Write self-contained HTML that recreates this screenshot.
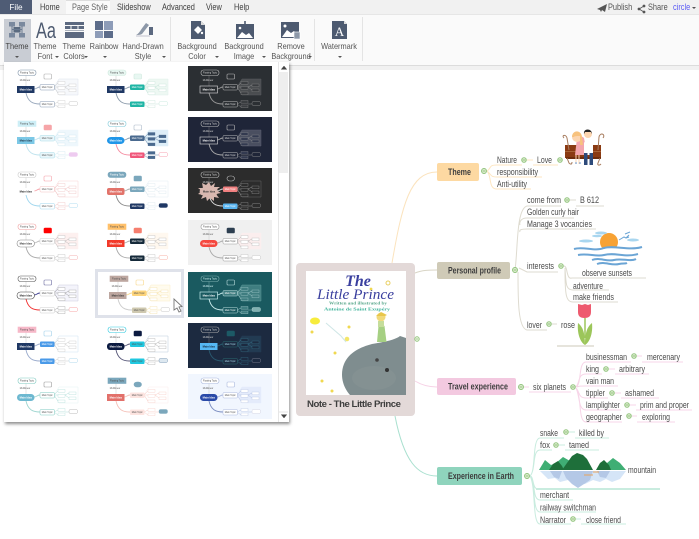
<!DOCTYPE html>
<html><head><meta charset="utf-8">
<style>
html,body{margin:0;padding:0;background:#fff}
body{width:699px;height:539px;overflow:hidden;position:relative;font-family:"Liberation Sans",sans-serif;color:#444}
.a{position:absolute;white-space:nowrap}
.tab{top:0;height:14px;line-height:15px;font-size:8.8px;color:#3c3c3c;transform:scaleX(.84);transform-origin:left center}
.lb{font-size:8.4px;color:#555;line-height:10px;text-align:center;transform:translateX(-50%) scaleX(.88)}
.ar{position:absolute;width:0;height:0;border-left:2px solid transparent;border-right:2px solid transparent;border-top:2px solid #555}
.thumb{position:absolute;width:84px;height:45px;display:block;filter:blur(.3px)}
</style></head>
<body>
<!-- tab bar -->
<div class="a" style="left:0;top:0;width:699px;height:14px;background:#f1f1f1"></div>
<div class="a" style="left:0;top:0;width:32px;height:14px;background:#4f5c75;color:#fff;font-size:8.2px;line-height:15px;text-align:center">File</div>
<div class="a" style="left:66px;top:0;width:44px;height:14px;background:#fafafa;border-top:1px solid #ddd;box-sizing:border-box"></div>
<div class="a tab" style="left:40px">Home</div>
<div class="a tab" style="left:72px;color:#666">Page Style</div>
<div class="a tab" style="left:117px">Slideshow</div>
<div class="a tab" style="left:162px">Advanced</div>
<div class="a tab" style="left:206px">View</div>
<div class="a tab" style="left:234px">Help</div>
<div class="a tab" style="left:608px;color:#555">Publish</div>
<div class="a tab" style="left:648px;color:#555">Share</div>
<div class="a tab" style="left:673px;color:#5a5af5">circle</div>
<div class="ar" style="left:692px;top:7px"></div>
<svg class="a" style="left:596px;top:2px" width="50" height="12" viewBox="0 0 50 12">
<path d="M1 7L11 2 9 10 6 8 5 10 4 8z" fill="#555"/>
<g stroke="#555" fill="#555" stroke-width=".8"><path d="M48 4L43 7 48 10" fill="none"/><circle cx="48" cy="4" r="1"/><circle cx="43" cy="7" r="1"/><circle cx="48" cy="10" r="1"/></g>
</svg>
<!-- ribbon -->
<div class="a" style="left:0;top:14px;width:699px;height:51px;background:#fafafa;border-top:1px solid #e6e6e6;box-sizing:border-box"></div>
<div class="a" style="left:0;top:65px;width:699px;height:5px;background:#f1f1f1;border-top:1px solid #dcdcdc;box-sizing:border-box"></div>
<div class="a" style="left:4px;top:19px;width:27px;height:43px;background:#c9cdd4"></div>
<div class="a" style="left:170px;top:17px;width:1px;height:44px;background:#e4e4e4"></div>
<div class="a" style="left:314px;top:19px;width:1px;height:42px;background:#e4e4e4"></div>
<div class="a" style="left:362px;top:17px;width:1px;height:44px;background:#e4e4e4"></div>

<svg class="a" style="left:0;top:15px" width="360" height="30" viewBox="0 15 360 30">
<!-- theme -->
<g fill="#7a899e"><rect x="9" y="22" width="6" height="4.500"/><rect x="19" y="22" width="6" height="4.500"/><rect x="9" y="33" width="6" height="4.500"/><rect x="19" y="33" width="6" height="4.500"/></g>
<rect x="13.500" y="27" width="7" height="5.500" fill="#5b6b80"/>
<path d="M12 26v7M22 26v7M12 29.500h10" stroke="#6a7a90" fill="none"/>
<text x="36" y="38" font-size="22" fill="#4d5a70" font-family="Liberation Sans" textLength="20" lengthAdjust="spacingAndGlyphs">Aa</text>
<!-- colors -->
<g fill="#5c6980"><rect x="65" y="22" width="19" height="3"/><rect x="65" y="26" width="5.500" height="3"/><rect x="71.500" y="26" width="6" height="3"/><rect x="78.500" y="26" width="5.500" height="3"/><rect x="65" y="30" width="19" height="1" opacity=".5"/><rect x="65" y="32" width="19" height="6"/></g>
<!-- rainbow -->
<g><rect x="95" y="21" width="8" height="9" fill="#5c6c8a"/><rect x="104" y="21" width="9" height="9" fill="#8d9cb8"/><rect x="95" y="31" width="8" height="7" fill="#8d9cb8"/><rect x="104" y="31" width="9" height="7" fill="#5c6c8a"/></g>
<!-- hand drawn -->
<path d="M136 35c3-1 5-6 10-12l3 2-7 9c-2 1-4 1-6 1z" fill="#8d98a8"/><rect x="149" y="27" width="4" height="8" fill="#5c6980"/><path d="M136 36h14" stroke="#aab" stroke-width=".7"/>
<!-- bg color -->
<path d="M191 21h10l4 4v14h-14z" fill="#4d5a70"/><path d="M201 21l4 4h-4z" fill="#ddd"/><path d="M194 30l4-4 4 4-4 4z" fill="#fff"/><circle cx="202" cy="33" r="1.200" fill="#fff"/>
<!-- bg image -->
<rect x="236" y="24" width="18" height="15" fill="#4d5a70"/><path d="M237 38l5-6 4 3 3-2 4 5z" fill="#fff"/><path d="M245 21v7M242 26l3 3 3-3" stroke="#4d5a70" stroke-width="1.600" fill="none"/><circle cx="240" cy="28" r="1.300" fill="#fff"/>
<!-- remove bg -->
<rect x="281" y="22" width="18" height="16" fill="#4d5a70"/><path d="M282 37l5-7 4 3 3-2 4 6z" fill="#fff"/><circle cx="285" cy="26" r="1.500" fill="#fff"/><rect x="294" y="32" width="6" height="7" fill="#8d98a8" stroke="#fff" stroke-width=".6"/>
<!-- watermark -->
<path d="M332 21h12l3 3v15h-15z" fill="#4d5a70"/><path d="M344 21l3 3h-3z" fill="#ddd"/><text x="339.500" y="36" font-size="13" fill="#fff" text-anchor="middle" font-family="Liberation Serif">A</text>
</svg>

<div class="a lb" style="left:17px;top:41px;color:#444">Theme</div>
<div class="a lb" style="left:45px;top:41px">Theme<br>Font</div>
<div class="a lb" style="left:74px;top:41px">Theme<br>Colors</div>
<div class="a lb" style="left:104px;top:41px">Rainbow</div>
<div class="a lb" style="left:143px;top:41px">Hand-Drawn<br>Style</div>
<div class="a lb" style="left:197px;top:41px">Background<br>Color</div>
<div class="a lb" style="left:244px;top:41px">Background<br>Image</div>
<div class="a lb" style="left:291px;top:41px">Remove<br>Background</div>
<div class="a lb" style="left:339px;top:41px">Watermark</div>
<div class="ar" style="left:15px;top:56px"></div>
<div class="ar" style="left:55px;top:56px"></div>
<div class="ar" style="left:84px;top:56px"></div>
<div class="ar" style="left:103px;top:56px"></div>
<div class="ar" style="left:162px;top:56px"></div>
<div class="ar" style="left:215px;top:56px"></div>
<div class="ar" style="left:262px;top:56px"></div>
<div class="ar" style="left:308px;top:56px"></div>
<div class="ar" style="left:338px;top:56px"></div>

<!-- canvas mindmap -->
<svg class="a" style="left:0;top:0" width="699" height="539" viewBox="0 0 699 539" font-family="Liberation Sans" font-size="8.8" fill="#4a4a4a">
<!-- connectors -->
<g fill="none" stroke-width="1">
<path d="M392 263C402 205 410 172 437 172" stroke="#fbe3bd"/>
<path d="M415 273C422 270 430 270 437 270" stroke="#d9d5c6"/>
<path d="M415 381C423 386 430 387 437 387" stroke="#f6d2e6"/>
<path d="M395 416C404 462 418 476 437 476" stroke="#a9e0cf"/>
</g>
<!-- note -->
<rect x="296" y="263" width="119" height="153" rx="4" fill="#e3d9d8"/>
<rect x="306" y="271" width="100" height="124" fill="#fff"/>
<text x="358" y="286" font-family="Liberation Serif" font-style="italic" font-size="16" fill="#3a3f9e" text-anchor="middle" font-weight="bold">The</text>
<text x="317" y="299" font-family="Liberation Serif" font-style="italic" font-size="15" fill="#3a3f9e" textLength="77" lengthAdjust="spacingAndGlyphs">Little Prince</text>
<text x="329" y="304.500" font-family="Liberation Serif" font-size="3.800" fill="#5aa88c" textLength="58" lengthAdjust="spacingAndGlyphs" font-weight="bold">Written and illustrated by</text>
<text x="324" y="310.500" font-family="Liberation Serif" font-size="4.600" fill="#3fb39a" textLength="66" lengthAdjust="spacingAndGlyphs" font-weight="bold">Antoine de Saint Exupéry</text>
<path d="M350 395C342 386 340 374 344 364 349 352 361 347 372 344 384 342 395 340 400 336L406 338V395z" fill="#7f8d8f"/>
<ellipse cx="374" cy="378" rx="22" ry="12" fill="#899696" opacity=".5"/>
<circle cx="377" cy="360" r="1.800" fill="#444"/><circle cx="387" cy="370" r="2" fill="#333"/>
<path d="M377 342l1.500-16c1-1 5-1 6 0l2 16z" fill="#a6d083"/>
<circle cx="381" cy="317" r="4.500" fill="#f1d97a"/><path d="M376 316l5-4 6 3-2 1h-8z" fill="#e9c64a"/>
<rect x="378" y="321" width="6" height="6" fill="#c5dd9b"/>
<ellipse cx="315" cy="321" rx="5" ry="3.500" fill="#f7ec3c"/>
<circle cx="347" cy="339" r="2.300" fill="#f4e66a"/>
<path d="M326 323l15 13 5 6" stroke="#cfe6e6" fill="none"/>
<g fill="#f0d850"><circle cx="371" cy="289" r="1.400"/><circle cx="388" cy="283" r="2" fill="none" stroke="#e8cf60"/><circle cx="349" cy="327" r="1.500"/><circle cx="312" cy="332" r="1.500"/><circle cx="335" cy="353" r="1.500"/><circle cx="322" cy="381" r="1.500"/><circle cx="332" cy="391" r="1.500"/></g>
<text x="307" y="407" font-size="9.600" font-weight="bold" fill="#3e3e3e" textLength="94" lengthAdjust="spacing">Note - The Little Prince</text>
<circle cx="417" cy="339" r="2.300" fill="#e8f4dc" stroke="#8fc27a" stroke-width=".8"/><path d="M415.500 339h3" stroke="#8fc27a" stroke-width=".7"/>

<!-- branch boxes -->
<rect x="437" y="163" width="42" height="18" rx="2" fill="#fdd9a2"/>
<rect x="437" y="262" width="73" height="17" rx="2" fill="#cfcab7"/>
<rect x="437" y="378" width="79" height="17" rx="2" fill="#f3c9e0"/>
<rect x="437" y="467" width="85" height="18" rx="2" fill="#8fd4bd"/>
<g font-weight="bold" fill="#3e3e3e" font-size="8.800">
<text x="448" y="175" textLength="23" lengthAdjust="spacingAndGlyphs">Theme</text><text x="448" y="273.500" textLength="53" lengthAdjust="spacingAndGlyphs">Personal profile</text><text x="448" y="389.500" textLength="60" lengthAdjust="spacingAndGlyphs">Travel experience</text><text x="448" y="479" textLength="66" lengthAdjust="spacingAndGlyphs">Experience in Earth</text>
</g>

<!-- stems -->
<g fill="none" stroke-width="1">
<g stroke="#fde6c2"><path d="M487 171C492 168 488 165 497 165H522M487 171C492 175 490 177 497 177H542M487 171C492 176 488 189 497 189H531"/><path d="M527 160h6M533 165h25"/><path d="M483 171h4"/></g>
<g stroke="#dedbd0"><path d="M515 270C518 250 516 209 527 206H561M520 225C519 222 521 218 527 218H574M520 232C519 230 521 229 527 229H596M519 268L527 272H558M518 272C518 300 518 328 527 330H547"/><path d="M570 200h6M576 206h28M552 324h5"/><path d="M557 346h37" stroke-width="1.600"/><path d="M564 266C568 266 566 280 572 278H646M565 268C566 285 566 290 573 290H609M565 270C565 295 566 302 573 302H618"/></g>
<g stroke="#f7d5e8"><path d="M524 387h5M529 392h42"/><path d="M576 387C582 384 578 362 586 362H631M576 387C580 382 578 374 586 374H602M577 387C580 386 578 386 586 386H618M576 388C580 392 578 398 586 398H608M576 388C580 396 578 410 586 410H621M576 388C582 398 578 422 586 422H622"/><path d="M637 356h5M642 362h41M609 369h6M615 374h34M615 393h6M621 398h38M630 405h6M636 410h56M632 416h5M637 422h38"/></g>
<g stroke="#c9ecdf"><path d="M530 476C536 472 532 438 540 438H564M530 476C536 470 532 450 540 450H552M530 476C534 476 532 489 538 489M530 476C536 482 532 500 540 500H573M530 476C536 484 532 512 540 512H596M530 476C536 486 532 524 540 524H571"/><path d="M569 432h6M575 438h34M559 445h6M565 450h34M576 519h5M581 524h45"/><path d="M536 489H660" stroke-width="2"/></g>
</g>
<!-- toggles -->
<g fill="#dcedcf" stroke="#8fc27a" stroke-width=".9">
<circle cx="484" cy="171" r="2.500"/><circle cx="524" cy="160" r="2.300"/><circle cx="560" cy="160" r="2.300"/><circle cx="567" cy="200" r="2.300"/><circle cx="515" cy="270" r="2.500"/><circle cx="561" cy="266" r="2.300"/><circle cx="549" cy="324" r="2.300"/><circle cx="521" cy="387" r="2.500"/><circle cx="573" cy="387" r="2.300"/><circle cx="634" cy="356" r="2.300"/><circle cx="606" cy="369" r="2.300"/><circle cx="612" cy="393" r="2.300"/><circle cx="627" cy="405" r="2.300"/><circle cx="629" cy="416" r="2.300"/><circle cx="566" cy="432" r="2.300"/><circle cx="556" cy="445" r="2.300"/><circle cx="527" cy="476" r="2.500"/><circle cx="573" cy="519" r="2.300"/>
</g>
<path d="M482.500 171h3M522.500 160h3M558.500 160h3M565.500 200h3M513.500 270h3M559.500 266h3M547.500 324h3M519.500 387h3M571.500 387h3M632.500 356h3M604.500 369h3M610.500 393h3M625.500 405h3M627.500 416h3M564.500 432h3M554.500 445h3M525.500 476h3M571.500 519h3" stroke="#7fb56a" stroke-width=".8" fill="none"/>

<!-- leaf text -->
<text x="497" y="163" textLength="20" lengthAdjust="spacingAndGlyphs">Nature</text><text x="537" y="163" textLength="15" lengthAdjust="spacingAndGlyphs">Love</text>
<text x="497" y="175" textLength="41" lengthAdjust="spacingAndGlyphs">responsibility</text><text x="497" y="187" textLength="30" lengthAdjust="spacingAndGlyphs">Anti-utility</text>
<text x="527" y="203" textLength="34" lengthAdjust="spacingAndGlyphs">come from</text><text x="580" y="203" textLength="19" lengthAdjust="spacingAndGlyphs">B 612</text>
<text x="527" y="215" textLength="52" lengthAdjust="spacingAndGlyphs">Golden curly hair</text><text x="527" y="227" textLength="65" lengthAdjust="spacingAndGlyphs">Manage 3 vocancies</text>
<text x="527" y="269" textLength="27" lengthAdjust="spacingAndGlyphs">interests</text><text x="582" y="276" textLength="50" lengthAdjust="spacingAndGlyphs">observe sunsets</text>
<text x="573" y="289" textLength="30" lengthAdjust="spacingAndGlyphs">adventure</text><text x="573" y="300" textLength="41" lengthAdjust="spacingAndGlyphs">make friends</text>
<text x="527" y="328" textLength="15" lengthAdjust="spacingAndGlyphs">lover</text><text x="561" y="328" textLength="14" lengthAdjust="spacingAndGlyphs">rose</text>
<text x="533" y="390" textLength="33" lengthAdjust="spacingAndGlyphs">six planets</text>
<text x="586" y="360" textLength="41" lengthAdjust="spacingAndGlyphs">businessman</text><text x="647" y="360" textLength="33" lengthAdjust="spacingAndGlyphs">mercenary</text>
<text x="586" y="372" textLength="13" lengthAdjust="spacingAndGlyphs">king</text><text x="619" y="372" textLength="26" lengthAdjust="spacingAndGlyphs">arbitrary</text>
<text x="586" y="384" textLength="28" lengthAdjust="spacingAndGlyphs">vain man</text>
<text x="586" y="396" textLength="19" lengthAdjust="spacingAndGlyphs">tippler</text><text x="625" y="396" textLength="29" lengthAdjust="spacingAndGlyphs">ashamed</text>
<text x="586" y="408" textLength="34" lengthAdjust="spacingAndGlyphs">lamplighter</text><text x="640" y="408" textLength="49" lengthAdjust="spacingAndGlyphs">prim and proper</text>
<text x="586" y="420" textLength="36" lengthAdjust="spacingAndGlyphs">geographer</text><text x="642" y="420" textLength="28" lengthAdjust="spacingAndGlyphs">exploring</text>
<text x="540" y="436" textLength="18" lengthAdjust="spacingAndGlyphs">snake</text><text x="579" y="436" textLength="25" lengthAdjust="spacingAndGlyphs">killed by</text>
<text x="540" y="448" textLength="10" lengthAdjust="spacingAndGlyphs">fox</text><text x="569" y="448" textLength="20" lengthAdjust="spacingAndGlyphs">tamed</text>
<text x="628" y="473" textLength="28" lengthAdjust="spacingAndGlyphs">mountain</text>
<text x="540" y="498" textLength="29" lengthAdjust="spacingAndGlyphs">merchant</text><text x="540" y="510.500" textLength="56" lengthAdjust="spacingAndGlyphs">railway switchman</text>
<text x="540" y="523" textLength="26" lengthAdjust="spacingAndGlyphs">Narrator</text><text x="586" y="523" textLength="35" lengthAdjust="spacingAndGlyphs">close friend</text>

<!-- couple on bench -->
<g>
<path d="M565 145h36v13h-36z" fill="#8a3a12"/><path d="M565 151.500h36" stroke="#c48a5a" stroke-width=".6"/><path d="M566 158h35" stroke="#6d2c0c" stroke-width="2"/>
<path d="M564 138c-3-3 2-4 3 0l2 12M567 158l2 5c2 2 3 1 3-1M603 138c3-4-3-6-4-1l-1 13M600 158l-2 5c-1 2 1 3 3 1" stroke="#a77c5e" fill="none" stroke-width="1"/>
<path d="M577 138c3-2 5-2 7 0l3 17h-12z" fill="#f4a6ad"/><circle cx="577" cy="137" r="5" fill="#fcd5b0"/><path d="M572 137c0-7 9-8 10 0l1 8h-3v-9c-2 0-6 0-6 1z" fill="#f7c27e"/>
<path d="M576 155v9M579 155v9" stroke="#fcd5b0"/><circle cx="576" cy="163" r=".8" fill="#5b8fcf"/><circle cx="580" cy="163" r=".8" fill="#5b8fcf"/>
<rect x="584" y="142" width="9" height="13" rx="1" fill="#fff"/><rect x="584" y="153" width="3.500" height="12" fill="#2d4a7a"/><rect x="589.500" y="153" width="3.500" height="12" fill="#2d4a7a"/>
<circle cx="588" cy="134" r="4" fill="#fcd5b0"/><path d="M584 134c-1-6 8-6 8 0l-1-2h-6z" fill="#222"/>
</g>
<!-- sunset -->
<g>
<circle cx="609" cy="242" r="9" fill="#f7a234"/>
<rect x="596" y="248" width="28" height="7" fill="#fff"/>
<g fill="#a9d6ef"><ellipse cx="586" cy="241" rx="7" ry="1.500"/><ellipse cx="601" cy="233" rx="6" ry="1.500"/><ellipse cx="633" cy="240" rx="6" ry="1.500"/><ellipse cx="597" cy="236" rx="5" ry="1.200"/></g>
<g fill="none" stroke="#6ba5d5" stroke-width="2"><path d="M574 249c10-3 20 3 30-1 10-3 25 3 38-1"/><path d="M578 255c10-2 18 2 26 0 12-3 20 3 34-1"/><path d="M592 260c8-3 14 2 22 0 8-2 16 2 22-1"/><path d="M597 264c8-3 14 2 22 0 4-1 6 0 8-1"/></g>
<path d="M619 240l5-3 2 1 3-3M626 238l3-1M625 234l5-2" stroke="#6ba5d5" fill="none"/>
</g>
<!-- tulip -->
<path d="M578 304l4 1 3-1 3 1 3-1 0 8c0 4-2 6-6.500 6s-6.500-2-6.500-6z" fill="#ee5b6f"/>
<path d="M585 318v20" stroke="#9cc65a" stroke-width="1.500"/>
<path d="M585 345c-5-3-8-12-7-22 5 4 7 10 7 22zM585 345c5-3 8-12 7-22-5 4-7 10-7 22z" fill="#9cc65a"/>
<!-- mountain -->
<g>
<path d="M539 470L545 460 551 465 556 463 563 457 570 461 574 470zM596 470L600 466 607 463 613 458 620 463 626 470z" fill="#3fae74"/>
<path d="M549 470L553 464 558 461 562 466 564 470zM562 470L567 463 572 456 577 453 583 455 587 459 593 470zM596 470L600 463 604 460 609 465 611 470z" fill="#1e6f3a"/>
<path d="M540 471H626L620 479 612 482 606 479 600 482 593 480 585 484 577 485 568 480 560 482 555 478 548 479z" fill="#d5e5f7"/>
<path d="M550 471H562L559 479 554 477zM563 471H593L590 480 584 484 578 488 572 484 566 478zM597 471H610L606 478 600 477z" fill="#b4c8e6"/>
<path d="M584 475h9M593 472h6" stroke="#e9a45c" stroke-width="1"/>
</g>
</svg>

<!-- theme panel -->
<div class="a" style="left:4px;top:62px;width:285px;height:360px;background:#fff;box-shadow:1px 2px 3px rgba(0,0,0,.45)"></div>
<div class="a" style="left:278px;top:62px;width:10px;height:360px;background:#fff;border-left:1px solid #e6e6e6;box-sizing:border-box"></div>
<div class="a" style="left:279px;top:72px;width:9px;height:101px;background:#eeeeee"></div>
<svg class="a" style="left:279px;top:62px" width="10" height="360" viewBox="0 0 10 360">
<path d="M2.500 7l2.500-3 2.500 3zM2 7.500h6" fill="#444" stroke="#444" stroke-width=".4"/>
<path d="M2.500 353l2.500 3 2.500-3zM2 352.500h6" fill="#444" stroke="#444" stroke-width=".4"/>
<path d="M0 350h9" stroke="#e6e6e6"/>
</svg>

<svg width="0" height="0" style="position:absolute">
<symbol id="t" viewBox="0 0 84 45" width="84" height="45">
<rect width="84" height="45" style="fill:var(--bg,#fff)"/>
<path d="M49 21L54 13H73V29H54z" style="fill:var(--bf,#f6f8fb);stroke:var(--bs,#dde3ec)" stroke-width=".5"/>
<path d="M21 9V20" style="stroke:var(--ln,#bbb)" stroke-width=".4"/>
<path d="M29 23C32 23 32 21 35 21" style="stroke:var(--l1,#999);fill:none" stroke-width=".9"/>
<path d="M21 27C23 36 28 38 35 38" style="stroke:var(--l2,#999);fill:none" stroke-width=".9"/>
<path d="M49 21H53M49 21L53 17M49 21L53 27M60 21L64 19M60 21L64 24M49 38L53 36M49 38L53 41M60 38H64" style="stroke:var(--ss,#bbb);fill:none" stroke-width=".4"/>
<rect x="13" y="4" width="18" height="5.500" style="fill:var(--f,#fff);stroke:var(--fs,#999);rx:var(--fr,2.500px)" stroke-width=".6"/>
<rect x="39" y="8" width="7.500" height="5" style="fill:var(--c,#fff);stroke:var(--cs,#aaa);rx:var(--cr,1px)" stroke-width=".6"/>
<rect x="12" y="20" width="17.500" height="7" style="fill:var(--m,#fff);stroke:var(--ms,none);rx:var(--mr,0px)" stroke-width=".6"/>
<rect x="35" y="18.500" width="14.500" height="5.500" style="fill:var(--t1,#fff);stroke:var(--t1s,none);rx:1px" stroke-width=".5"/>
<rect x="35" y="35.500" width="14.500" height="5.500" style="fill:var(--t2,#fff);stroke:var(--t2s,none);rx:1px" stroke-width=".5"/>
<g style="fill:var(--sf,#fff);stroke:var(--ss,#bbb)" stroke-width=".3">
<rect x="53" y="15.500" width="7" height="2.800"/><rect x="53" y="20.500" width="7" height="2.800"/><rect x="53" y="26" width="7" height="2.800"/>
<rect x="64" y="18" width="7" height="2.800"/><rect x="64" y="23" width="7" height="2.800"/>
<rect x="53" y="34.500" width="7" height="2.800"/><rect x="53" y="39" width="7" height="2.800"/>
</g>
<rect x="64" y="35.500" width="8.500" height="4" style="fill:var(--u,#fff);stroke:var(--us,#bbb);rx:1.500px" stroke-width=".4"/>
<g font-family="Liberation Sans" font-size="2.300" text-anchor="middle">
<text x="22" y="7.500" style="fill:var(--ft,#555)">Floating Topic</text>
<text x="20" y="15" style="fill:var(--nt,#666)">Multilinear</text>
<text x="20.800" y="24.500" font-weight="bold" font-size="2.700" style="fill:var(--mt,#fff)">Main Idea</text>
<text x="42.200" y="22" style="fill:var(--tt,#555)">Main Topic</text>
<text x="42.200" y="39" style="fill:var(--t2t,var(--tt,#555))">Main Topic</text>
</g>
</symbol>
</svg>

<!-- row 1 -->
<svg class="thumb" style="left:5px;top:66px;--m:#1f3864;--t1s:#8497b0;--t2s:#8497b0;--l1:#9aa9bd;--l2:#9aa9bd;--fs:#7f93a8"><use href="#t"/></svg>
<svg class="thumb" style="left:95px;top:66px;--m:#1f3864;--t1:#1fb5a5;--t2:#1fb5a5;--tt:#fff;--l1:#8a9aaa;--l2:#8a9aaa;--f:#e8f7f2;--fs:#cfe9dd;--c:#e8f7f2;--cs:#cfe9dd;--bf:#eef8f3;--bs:#e0f0ea;--ss:#b9ddd0;--us:#bfe6d8"><use href="#t"/></svg>
<svg class="thumb" style="left:188px;top:66px;--bg:#2b2f33;--m:#2b2f33;--ms:#ddd;--t1:#2b2f33;--t1s:#bbb;--t2:#2b2f33;--t2s:#bbb;--f:#2b2f33;--fs:#bbb;--c:#2b2f33;--cs:#bbb;--bf:#4a4d50;--bs:#5a5d60;--sf:#3a3d40;--ss:#999;--u:#2b2f33;--us:#999;--ft:#ccc;--nt:#ccc;--tt:#ddd;--l1:#999;--l2:#999;--ln:#888"><use href="#t"/></svg>
<!-- row 2 -->
<svg class="thumb" style="left:5px;top:117px;--m:#7cc8e6;--mt:#234;--f:#cdeef6;--fs:#cdeef6;--fr:0;--c:#f6a5a8;--cs:#f6a5a8;--t1:#eaf7fb;--t1s:#a8dbe8;--t2:#eaf7fb;--t2s:#a8dbe8;--l1:#bfe3ee;--l2:#bfe3ee;--bf:#eef7fc;--bs:#eef7fc;--ss:#c3e2ec;--u:#eecbf0;--us:#eecbf0"><use href="#t"/></svg>
<svg class="thumb" style="left:95px;top:117px;--m:#2196e8;--mr:4px;--t1:#4a6a8f;--t2:#f0567a;--tt:#fff;--f:#fff;--fs:#7fc9d9;--c:#fff;--cs:#aab8c8;--l1:#8a9aaa;--l2:#f58a9f;--bf:#deeef8;--bs:#deeef8;--sf:#4a6a8f;--ss:#4a6a8f;--us:#f58a9f"><use href="#t"/></svg>
<svg class="thumb" style="left:188px;top:117px;--bg:#1f2538;--m:#1f2538;--ms:#ddd;--t1:#1f2538;--t1s:#bbb;--t2:#1f2538;--t2s:#bbb;--f:#1f2538;--fs:#bbb;--c:#1f2538;--cs:#bbb;--bf:#4a4f60;--bs:#5a5f70;--sf:#333a50;--ss:#999;--u:#1f2538;--us:#999;--ft:#ccc;--nt:#ccc;--tt:#ddd;--l1:#aaa;--l2:#aaa;--ln:#888"><use href="#t"/></svg>
<!-- row 3 -->
<svg class="thumb" style="left:5px;top:168px;--m:#fff;--mt:#222;--fs:#ccc;--cs:#f5a0a8;--t1s:#f5c0c0;--t2s:#9fd6ee;--l1:#f5a0a8;--l2:#9fd6ee;--bf:#fff;--bs:#f8d5d5;--ss:#eab0b0;--us:#9fd6ee"><use href="#t"/></svg>
<svg class="thumb" style="left:95px;top:168px;--m:#e2736a;--mr:2px;--f:#7ba7bc;--fs:#7ba7bc;--ft:#fff;--c:#7ba7bc;--cs:#7ba7bc;--t1:#7ba7bc;--t2:#1f3864;--tt:#fff;--l1:#aaa;--l2:#888;--bf:#fff;--bs:#e4eef4;--ss:#cfdfe8;--u:#1f3864;--us:#1f3864"><use href="#t"/></svg>
<svg class="thumb" style="left:188px;top:168px;--bg:#2c2c2c;--m:#d9b8b0;--ms:#d9b8b0;--mr:3px;--mt:#333;--t1:#f08080;--t2:#5ab5f0;--tt:#fff;--f:#2c2c2c;--fs:#bbb;--c:#2c2c2c;--cs:#bbb;--cr:3px;--bf:#2c2c2c;--bs:#666;--sf:#2c2c2c;--ss:#aaa;--u:#2c2c2c;--us:#999;--ft:#ccc;--nt:#ccc;--l1:#ddd;--l2:#ddd;--ln:#888"><use href="#t"/><path d="M21 14l2 4 4-3-1 4 6 0-4 3 5 3-5 1 3 4-5-1 0 4-4-3-3 3-1-4-5 2 2-4-5-1 4-3-4-3 5 0-1-5 4 2z" fill="#d9b8b0"/><text x="21" y="24.500" font-size="2.700" font-family="Liberation Sans" fill="#333" text-anchor="middle" font-weight="bold">Main Idea</text></svg>
<!-- row 4 -->
<svg class="thumb" style="left:5px;top:220px;--m:#fff;--ms:#888;--mr:3.500px;--mt:#333;--fs:#f0a0a0;--c:#f00;--cs:#f00;--t1s:#ccc;--t2s:#ccc;--l1:#bbb;--l2:#aaa;--bf:#fdf0ef;--bs:#fdf0ef;--ss:#aaa;--us:#f0a0a0"><use href="#t"/></svg>
<svg class="thumb" style="left:95px;top:220px;--m:#f23a2a;--f:#ffc06a;--fs:#ffc06a;--fr:0;--c:#f67f6f;--cs:#f67f6f;--t1:#152a3a;--t2:#152a3a;--tt:#fff;--l1:#aaa;--l2:#aaa;--bf:#fff8ef;--bs:#fff8ef;--ss:#aaa;--us:#f5a090"><use href="#t"/></svg>
<svg class="thumb" style="left:188px;top:220px;--bg:#f0f0f0;--m:#f5483f;--mr:3.500px;--c:#2d3e50;--cs:#2d3e50;--t1s:#999;--t2s:#999;--l1:#aaa;--l2:#aaa;--bf:#fbeeee;--bs:#fbeeee;--ss:#aaa"><use href="#t"/></svg>
<!-- row 5 -->
<svg class="thumb" style="left:5px;top:272px;--m:#fff;--ms:#444;--mr:3.500px;--mt:#222;--fs:#555;--cs:#6a6aa0;--t1s:#ccc;--t2s:#ccc;--l1:#3a3a90;--l2:#f03030;--bf:#f4f4fb;--bs:#ccccdd;--ss:#888;--us:#f59090"><use href="#t"/></svg>
<svg class="thumb" style="left:97px;top:272px;--m:#bda7a0;--mt:#333;--f:#bda7a0;--fs:#bda7a0;--fr:0;--t1:#fdd47a;--t2:#cfc9b0;--cs:#f8d88a;--l1:#f8d88a;--l2:#ccc;--bf:#fffbee;--bs:#fbeec8;--ss:#f0d890"><use href="#t"/></svg>
<svg class="thumb" style="left:188px;top:272px;--bg:#1a5a60;--m:#1a5a60;--ms:#dff;--mt:#fff;--t1:#3f7d80;--t1s:#bdd;--t2:#1a5a60;--t2s:#bdd;--f:#1a5a60;--fs:#7fb0b0;--c:#1a5a60;--cs:#bdd;--bf:#3f7d80;--bs:#5f9a9a;--sf:#3f7d80;--ss:#bdd;--u:#7fb0b0;--us:#bdd;--ft:#cee;--nt:#cee;--tt:#fff;--l1:#cee;--l2:#cee;--ln:#8bb"><use href="#t"/></svg>
<!-- row 6 -->
<svg class="thumb" style="left:5px;top:323px;--m:#1f3864;--f:#f6b8c8;--fs:#f6b8c8;--fr:0;--cs:#a0d0ea;--t1:#4a9ae8;--t2:#4a9ae8;--tt:#fff;--l1:#9ac;--l2:#9ac;--bf:#fff;--bs:#cfe4f2;--ss:#bbb;--us:#a0d0ea"><use href="#t"/></svg>
<svg class="thumb" style="left:95px;top:323px;--m:#0b1a40;--mr:3px;--fs:#30c9e0;--c:#0b1a40;--cs:#0b1a40;--t1:#20c8e0;--t2:#20c8e0;--l1:#557;--l2:#557;--bf:#fff;--bs:#bcd;--ss:#999;--u:#dde8f0;--us:#68a"><use href="#t"/></svg>
<svg class="thumb" style="left:188px;top:323px;--bg:#1c2a40;--m:#55b8f5;--mt:#123;--t1:#1c2a40;--t1s:#2a6a70;--t2:#1c2a40;--t2s:#2a6a70;--f:#1c2a40;--fs:#aaa;--c:#1c5a66;--cs:#1c5a66;--bf:#223b52;--bs:#223b52;--sf:#1c2a40;--ss:#3a7a90;--u:#1c2a40;--us:#889;--ft:#ccc;--nt:#ccc;--tt:#ade;--l1:#2a5a70;--l2:#2a5a70;--ln:#888"><use href="#t"/></svg>
<!-- row 7 -->
<svg class="thumb" style="left:5px;top:374px;--m:#6db8d0;--mr:3.500px;--fs:#7fc9c0;--cs:#999;--t1s:#7fc9c0;--t2s:#7fc9c0;--l1:#9fd6d0;--l2:#9fd6d0;--bf:#fff;--bs:#e4f4f4;--ss:#9fd6d0;--us:#aaa"><use href="#t"/></svg>
<svg class="thumb" style="left:95px;top:374px;--m:#e2706a;--f:#7ba7bc;--fs:#7ba7bc;--fr:0;--c:#7ba7bc;--cs:#7ba7bc;--cr:3px;--t1:#fde4e0;--t2:#fde4e0;--l1:#f5c0b8;--l2:#f5c0b8;--bf:#fff;--bs:#fbecea;--ss:#f5c0b8;--u:#7ba7bc;--us:#7ba7bc"><use href="#t"/></svg>
<svg class="thumb" style="left:188px;top:374px;--bg:#f1f6fe;--m:#2a4aa8;--mr:3.500px;--fs:#aab8dd;--cs:#aab8dd;--t1s:#aab8dd;--t2s:#aab8dd;--l1:#aab8dd;--l2:#7a8cc0;--bf:#e4ebfb;--bs:#e4ebfb;--ss:#aab8dd;--us:#ccd"><use href="#t"/></svg>

<!-- selection frame above thumbs -->
<div class="a" style="left:95px;top:269px;width:89px;height:49px;border:3px solid #dfe2ea;box-sizing:border-box"></div>
<!-- cursor -->
<svg class="a" style="left:172px;top:298px" width="11" height="15" viewBox="0 0 11 15"><path d="M2 1v11l3-2 2 4 2-1-2-4 3-.5z" fill="#fff" stroke="#777" stroke-width=".9"/></svg>
</body></html>
